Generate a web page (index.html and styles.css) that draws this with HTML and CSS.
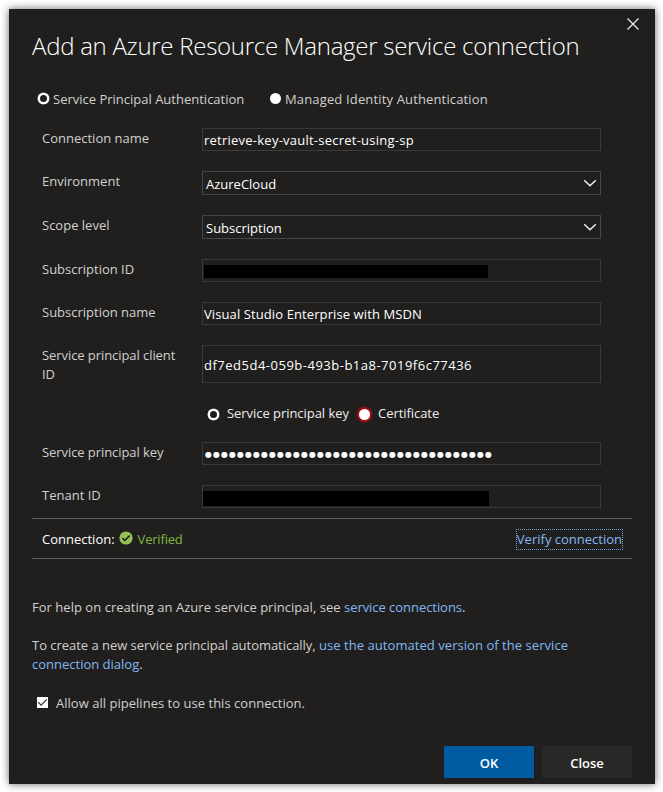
FILE: index.html
```
<!DOCTYPE html>
<html lang="en">
<head>
<meta charset="utf-8">
<title>Add an Azure Resource Manager service connection</title>
<link rel="stylesheet" href="styles.css">
</head>
<body>
<main class="dialog">
  <button class="dismiss" aria-label="Close dialog"><svg width="12" height="12" viewBox="0 0 12 12"><path d="M.5.5l11 11M11.5.5l-11 11"/></svg></button>
  <h1 class="title">Add an Azure Resource Manager service connection</h1>
  <div class="auth">
    <label class="option principal"><span class="radio on"></span>Service Principal Authentication</label>
    <label class="option managed"><span class="radio"></span>Managed Identity Authentication</label>
  </div>
  <div class="form">
    <div class="label">Connection name</div>
    <div class="field name">retrieve-key-vault-secret-using-sp</div>
    <div class="label">Environment</div>
    <div class="field select">AzureCloud<svg class="chevron" width="14" height="8" viewBox="0 0 14 8"><path d="M1.2 1.2L7 6.7l5.8-5.5"/></svg></div>
    <div class="label">Scope level</div>
    <div class="field select">Subscription<svg class="chevron" width="14" height="8" viewBox="0 0 14 8"><path d="M1.2 1.2L7 6.7l5.8-5.5"/></svg></div>
    <div class="label">Subscription ID</div>
    <div class="field"><span class="mask"></span></div>
    <div class="label">Subscription name</div>
    <div class="field subscription">Visual Studio Enterprise with MSDN</div>
    <div class="label tight">Service principal client ID</div>
    <div class="field tall">df7ed5d4-059b-493b-b1a8-7019f6c77436</div>
    <div class="credential">
      <label class="option key"><span class="radio on"></span>Service principal key</label>
      <label class="option cert"><span class="radio invalid"></span>Certificate</label>
    </div>
    <div class="label tight">Service principal key</div>
    <div class="field secret">●●●●●●●●●●●●●●●●●●●●●●●●●●●●●●●●●●●●</div>
    <div class="label">Tenant ID</div>
    <div class="field"><span class="mask tenant"></span></div>
  </div>
  <div class="status">
    <span>Connection:</span>
    <svg class="tick" width="14" height="14" viewBox="0 0 14 14"><circle cx="7" cy="7" r="6.6"/><path d="M3.3 7.1l2.5 2.4 4.9-4.9"/></svg>
    <span class="verified">Verified</span>
    <a class="verify">Verify connection</a>
  </div>
  <p class="help">For help on creating an Azure service principal, see <a>service connections</a>.</p>
  <p class="auto">To create a new service principal automatically, <a>use the automated version of the service</a></p>
  <p><a>connection dialog</a>.</p>
  <label class="allow"><span class="check"><svg width="11" height="11" viewBox="0 0 11 11"><path d="M1.2 5.2l2.9 2.9 5.7-5.7"/></svg></span>Allow all pipelines to use this connection.</label>
  <div class="actions"><button class="btn primary">OK</button><button class="btn">Close</button></div>
</main>
</body>
</html>
```
FILE: styles.css
```
* { box-sizing: border-box; }
body {
  margin: 0;
  padding: 9px 0 0 9px;
  height: 792px;
  background: #fff;
  overflow: hidden;
  font: 13px/19px "Open Sans", "Noto Sans", sans-serif;
  color: #d0d0cf;
}
.dialog {
  position: relative;
  width: 646px;
  height: 775px;
  padding: 19px 23px 0;
  background: #201f1e;
  box-shadow: 0 0 8px rgba(0, 0, 0, .6);
}
svg { display: block; fill: none; }
button { padding: 0; border: 0; font: inherit; color: #fff; }
.dismiss { position: absolute; top: 9px; right: 16px; background: none; }
.dismiss path { stroke: #eee; stroke-width: 1.2; }
.title {
  margin: 0;
  height: 61px;
  font-size: 24px;
  line-height: 36px;
  font-weight: 300;
  letter-spacing: -.27px;
  white-space: nowrap;
  color: #fff;
}
.auth { display: flex; height: 39px; padding: 1px 0 0 6px; }
.option { display: flex; white-space: nowrap; height: 19px; }
.radio {
  flex: none;
  width: 11px;
  height: 11px;
  margin-top: 3px;
  border-radius: 50%;
  background: #fff;
}
.radio.on { background: #201f1e; border: 2px solid #fff; box-shadow: 0 0 0 .5px #ddd; }
.radio.invalid { box-shadow: 0 0 2px 2px #b80f14; }
.principal { width: 232px; gap: 4px; }
.managed { gap: 4px; letter-spacing: .15px; }
.form {
  display: grid;
  grid-template-columns: 160px 399px;
  grid-template-rows: 43px 44px 44px 43px 43px 58px 39px 43px 33px;
  align-items: start;
  padding-left: 10px;
}
.label { padding: 1px 20px 0 0; }
.tight { letter-spacing: -.07px; }
.field {
  height: 23px;
  padding: 2px 1px 0;
  border: 1px solid #3b3a39;
  color: #fff;
  white-space: nowrap;
}
.name { letter-spacing: .24px; }
.subscription { letter-spacing: .1px; }
.select {
  display: flex;
  justify-content: space-between;
  height: 24px;
  padding: 3px 3px 0;
  border-color: #484644;
}
.chevron { margin-top: 4px; }
.chevron path { stroke: #eee; stroke-width: 1.5; }
.mask { display: block; width: 284px; height: 13px; margin-top: 3px; background: #000; }
.mask.tenant { width: 286px; height: 15px; margin-left: -1px; }
.tall { height: 38px; padding-top: 10px; letter-spacing: .5px; }
.secret { padding-left: 2px; font: 8px/19px "DejaVu Sans", sans-serif; letter-spacing: 1.02px; }
.credential { grid-column: 2; display: flex; padding: 1px 0 0 6px; color: #eee; letter-spacing: -.05px; }
.key { width: 151px; gap: 8px; }
.cert { gap: 8px; }
.credential .radio { margin-top: 5px; }
.status {
  display: flex;
  align-items: center;
  height: 41px;
  padding: 1px 9px 0 10px;
  border: solid #605e5c;
  border-width: 1px 0;
  color: #fff;
}
.tick { margin: -3px 5px 0 4px; }
.tick circle { fill: #92c353; }
.tick path { stroke: #201f1e; stroke-width: 1.5; }
.verified { color: #7eb83f; letter-spacing: -.2px; }
a { color: #82b8f2; }
.verify { margin-left: auto; border: 1px dotted #6aa5e8; line-height: 19px; }
p { margin: 0; }
.help { padding-top: 39px; letter-spacing: .03px; }
.help a { letter-spacing: -.05px; }
.auto { padding-top: 19px; letter-spacing: -.03px; white-space: nowrap; }
.auto a { letter-spacing: .05px; }
.allow { display: flex; margin-top: 20px; padding-left: 5px; letter-spacing: .025px; }
.check { width: 11px; height: 11px; margin: 3px 8px 0 0; background: #fff; }
.check path { stroke: #333; stroke-width: 1.2; }
.actions { display: flex; justify-content: flex-end; gap: 8px; margin-top: 33px; }
.btn { width: 90px; height: 32px; padding-top: 2px; background: #292827; font-weight: 600; }
.primary { background: #005ba1; }
```
